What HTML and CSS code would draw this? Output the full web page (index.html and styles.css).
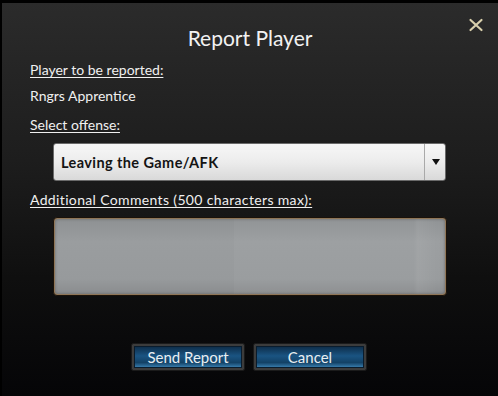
FILE: index.html
```html
<!doctype html>
<html lang="en">
  <head>
    <meta charset="UTF-8" />
    <title>Report Player</title>
    <link rel="stylesheet" href="styles.css">
  </head>
  <body>
    <div class="dialog">
      <button class="close" aria-label="Close">
        <svg width="16" height="14" viewBox="0 0 16 14">
          <path d="M2.5 2 L13.5 12 M13.5 2 L2.5 12" stroke="#d9d0ac" stroke-width="2.2" stroke-linecap="round" />
        </svg>
      </button>
      <h1 class="title">Report Player</h1>
      <div class="label label-first">Player to be reported:</div>
      <div class="player">Rngrs Apprentice</div>
      <div class="label label-offense">Select offense:</div>
      <div class="select">
        <span class="select-value">Leaving the Game/AFK</span>
        <span class="select-arrow"></span>
      </div>
      <div class="label label-comments">Additional Comments (500 characters max):</div>
      <div class="comments"><div class="comments-inner"></div></div>
      <div class="actions">
        <button class="btn">Send Report</button>
        <button class="btn">Cancel</button>
      </div>
    </div>
  </body>
</html>
```

FILE: styles.css
```css
html,
body {
  margin: 0;
  padding: 0;
  background: #050505;
}
body {
  font-family: "Lato", "Open Sans", sans-serif;
  color: #eee;
}
.dialog {
  position: relative;
  width: 496px;
  height: 393px;
  border-top: 3px solid #000;
  border-left: 2px solid #000;
  background: linear-gradient(180deg, #2b2b2b 0%, #1d1d1d 40%, #0f0f0f 70%, #050507 100%);
  display: flex;
  flex-direction: column;
  padding: 0;
}
.close {
  position: absolute;
  top: 15px;
  right: 14px;
  background: none;
  border: none;
  padding: 0;
  width: 16px;
  height: 14px;
  cursor: pointer;
}
.close svg {
  display: block;
}
.title {
  margin: 23px 0 0 0;
  font-size: 21px;
  font-weight: 400;
  line-height: 24px;
  text-align: center;
  color: #f2f2f2;
}
.label {
  margin-left: 28px;
  font-size: 14px;
  line-height: 20px;
  color: #f0f0f0;
  text-decoration: underline;
  text-underline-offset: 2px;
  text-decoration-thickness: 1px;
}
.label-first {
  margin-top: 10px;
}
.player {
  margin: 6px 0 0 28px;
  font-size: 14px;
  line-height: 20px;
  color: #f0f0f0;
}
.label-offense {
  margin-top: 9px;
}
.select {
  margin: 8px 0 0 51px;
  width: 393px;
  height: 38px;
  box-sizing: border-box;
  border: 1px solid #6a6a6a;
  border-radius: 3px;
  background: linear-gradient(180deg, #f7f7f7 0%, #ececec 50%, #d9d9d9 100%);
  display: flex;
  align-items: center;
}
.select-value {
  flex: 1;
  padding-left: 7px;
  font-size: 14.5px;
  font-weight: 700;
  letter-spacing: 0.4px;
  color: #141414;
}
.select-arrow {
  width: 20px;
  height: 36px;
  border-left: 1px solid #a9a9a9;
  position: relative;
}
.select-arrow::after {
  content: "";
  position: absolute;
  left: 7px;
  top: 15px;
  border-left: 4px solid transparent;
  border-right: 4px solid transparent;
  border-top: 6px solid #111;
}
.label-comments {
  margin-top: 9px;
  letter-spacing: 0.35px;
}
.comments {
  margin: 7px 0 0 51px;
  width: 394px;
  height: 79px;
  box-sizing: border-box;
  border: 1px solid #1a120a;
  border-radius: 4px;
  background: #8f7658;
  padding: 1px;
}
.comments-inner {
  height: 100%;
  border-radius: 3px;
  background:
    linear-gradient(90deg, rgba(255, 255, 255, 0) 0%, rgba(255, 255, 255, 0) 46%, rgba(255, 255, 255, 0.03) 46%, rgba(255, 255, 255, 0.03) 92%, rgba(255, 255, 255, 0.08) 93%, rgba(255, 255, 255, 0.02) 98%),
    linear-gradient(180deg, #8e9193 0%, #9a9d9f 30%, #979a9c 80%, #8a8c8e 100%);
  box-shadow: inset 0 0 3px rgba(40, 40, 40, 0.4);
}
.actions {
  margin-top: 48px;
  display: flex;
  justify-content: center;
  gap: 10px;
  padding-right: 2px;
}
.btn {
  width: 112px;
  height: 26px;
  box-sizing: border-box;
  border: 2px solid #3c3c3c;
  outline: 1px solid #1a1a1a;
  border-radius: 1px;
  background: linear-gradient(180deg, #0d2b46 0%, #1a5482 45%, #134266 75%, #3e86b8 100%);
  box-shadow: inset 0 0 0 1px #0a1c2c;
  color: #e8eef2;
  font-family: "Lato", "Open Sans", sans-serif;
  font-size: 15px;
  line-height: 20px;
  padding: 0;
  cursor: pointer;
}
```
